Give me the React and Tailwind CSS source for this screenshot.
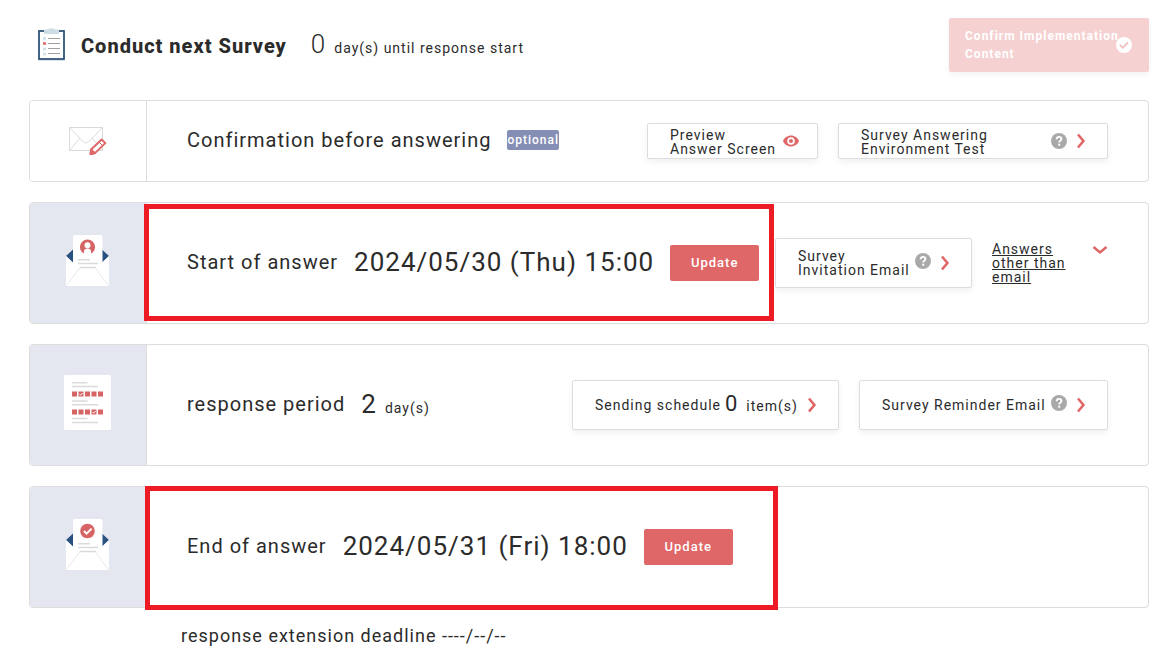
// ==============================================
// Survey schedule overview
// ==============================================

import clsx from "clsx";

const ClipboardIcon = () => (
  <svg width="28" height="34" viewBox="0 0 28 34" fill="none" aria-hidden="true">
    <rect x="2" y="3" width="25" height="28" fill="#fff" stroke="#2f5479" strokeWidth="1.800" />
    <path d="M1 32.500h27" stroke="#d9e3ec" />
    <path d="M7 6V1.500h4.500V.5h6v1H22V6z" fill="#cddde6" />
    <path d="M11 10.500h12M11 15.500h12M11 20.500h12M11 25.500h12" stroke="#a0a0a0" />
    <path d="M6 10.500h3M6 21h3M6 26h3" stroke="#cfe0ea" strokeWidth="2.500" />
    <path d="M6 15.500h3" stroke="#df6767" strokeWidth="2.500" />
  </svg>
);

const MailEditIcon = () => (
  <svg width="38" height="30" viewBox="0 0 38 30" fill="none" aria-hidden="true">
    <path d="M.5 1.500h33v23H.5z" stroke="#d9d9d9" />
    <path d="M.5 1.500 14.500 16q2.500 2 5 0L33.500 1.500M.5 24.500 11 12M33.500 24.500 23 12" stroke="#dcdcdc" />
    <path d="m21.500 28 .8-4.800L32.700 13.500l3.600 3.600-10.300 10z" fill="#fff" stroke="#df6767" strokeWidth="2" strokeLinejoin="round" />
    <path d="m21 28.700 1-6.200 5 4.900zM30 16l3.800 3.800" fill="#df6767" stroke="#df6767" />
  </svg>
);

const OpenMail = ({ children }) => (
  <svg width="43" height="51" viewBox="0 0 43 51" fill="none" aria-hidden="true">
    <path d="m0 21 7-6.500V28zM43 21l-7-6.500V28z" fill="#2a5280" />
    <path d="M0 21l7 6.500h29l7-6.500v28.500q0 1.500-1.500 1.500h-40Q0 51 0 49.500z" fill="#fff" />
    <path d="M8.500 0h26q2 0 2 2v30H7V2q0-2 1.500-2z" fill="#fff" />
    <path d="m1 50 13-17.500M42 50 29 32.500" stroke="#e9e9ec" />
    <path d="M12 24.700h12M12 28.500h20M14 32.500h16" stroke="#dadada" strokeWidth="1.500" />
    {children}
  </svg>
);

const MailPersonIcon = () => (
  <OpenMail>
    <circle cx="21.500" cy="12" r="7.600" fill="#d66464" />
    <circle cx="21.500" cy="10.200" r="3" fill="#fff" />
    <path d="M17.800 20v-2.500q0-4 3.700-4t3.700 4V20z" fill="#fff" />
  </OpenMail>
);

const MailCheckIcon = () => (
  <OpenMail>
    <circle cx="21.500" cy="12" r="7.300" fill="#d66464" />
    <path d="m18 12 2.600 2.600 5-5" stroke="#fff" strokeWidth="2" />
  </OpenMail>
);

const boxes = [8, 14.5, 21, 27.5, 34];

const SheetIcon = () => (
  <svg width="47" height="55" viewBox="0 0 47 55" fill="none" aria-hidden="true">
    <rect width="47" height="55" rx="1.500" fill="#fff" />
    <path d="M8 7.800h15.500M8 11.500h26M8 26h15.500M8 29.700h26M8 43.500h15.500M8 47.500h26" stroke="#dcdcdc" strokeWidth="1.400" />
    {boxes.map((x) => (
      <g key={x} fill="#d66464">
        <rect x={x} y="16.500" width="5" height="5" />
        <rect x={x} y="34.500" width="5" height="5" />
      </g>
    ))}
    <path d="m15.500 19 1.200 1.200 2-2.200M28.500 37l1.200 1.200 2-2.200" stroke="#fff" />
  </svg>
);

const EyeIcon = () => (
  <svg width="16" height="12" viewBox="0 0 16 12" aria-hidden="true" className="shrink-0">
    <path
      fillRule="evenodd"
      d="M8 .5C4.400.5 1.300 2.800 0 6c1.300 3.200 4.400 5.500 8 5.500s6.700-2.300 8-5.500C14.700 2.800 11.600.5 8 .5zM8 9.800a3.800 3.800 0 1 1 0-7.600 3.800 3.800 0 0 1 0 7.600z"
      fill="#df6767"
    />
    <circle cx="8" cy="6" r="2" fill="#df6767" />
  </svg>
);

const ChevronIcon = ({ down = false }) => (
  <svg
    width="16"
    height="16"
    viewBox="0 0 16 16"
    fill="none"
    aria-hidden="true"
    className={clsx("shrink-0", down && "rotate-90")}
  >
    <path d="m5 1.500 5.400 6.500L5 14.500" stroke="#df6767" strokeWidth="2.600" />
  </svg>
);

const HelpIcon = () => (
  <svg width="16" height="16" viewBox="0 0 16 16" fill="none" aria-hidden="true" className="shrink-0">
    <circle cx="8" cy="8" r="8" fill="#a9a9a9" />
    <path d="M5.700 6.300c0-1.500 1-2.400 2.400-2.400s2.300.8 2.300 2.100c0 1.600-2.200 1.700-2.200 3.500" stroke="#fff" strokeWidth="1.900" />
    <path d="M7.200 10.700h2v2h-2z" fill="#fff" />
  </svg>
);

const CheckIcon = () => (
  <svg width="16" height="16" viewBox="0 0 16 16" fill="none" aria-hidden="true">
    <circle cx="8" cy="8" r="8" fill="#fff" />
    <path d="m4 8 2.800 2.800L12 5.500" stroke="#f0c2c2" strokeWidth="1.800" />
  </svg>
);

const Card = ({ icon, tinted = true, children }) => (
  <section className="relative flex rounded border border-[#dddddd] bg-white">
    <div
      className={clsx(
        "flex w-[117px] shrink-0 items-center justify-center rounded-l-[3px] border-r border-[#dddddd]",
        tinted ? "bg-[#e4e7ef] pb-1.5 pr-0.5" : "bg-white",
      )}
    >
      {icon}
    </div>
    <div
      className={clsx(
        "flex flex-1 items-center justify-between pl-10 pr-10",
        tinted ? "min-h-[120px]" : "min-h-20",
      )}
    >
      {children}
    </div>
  </section>
);

const OutlineButton = ({ className, children }) => (
  <button
    type="button"
    className={clsx(
      "flex shrink-0 items-center rounded-xs border border-[#dddddd] bg-white pl-[22px] text-left text-sm leading-[14px] shadow-[0_3px_6px_rgba(0,0,0,0.06)]",
      className,
    )}
  >
    {children}
  </button>
);

const UpdateButton = () => (
  <button type="button" className="h-9 w-[89px] rounded-xs bg-[#df6767] text-[13px] font-medium text-white">
    Update
  </button>
);

const DateRow = ({ title, date }) => (
  <div className="flex shrink-0 items-center gap-4 whitespace-nowrap">
    <h3 className="pb-0.5 text-xl">{title}</h3>
    <time className="pb-0.5 text-[26px] leading-9">{date}</time>
    <UpdateButton />
  </div>
);

const App = () => {
  return (
    <main className="bg-white pl-[29px] pr-[25px] pt-[18px] font-['Roboto',sans-serif] tracking-[1px] text-[#2b2b2b]">
      <header className="flex items-center justify-between">
        <div className="flex items-center gap-4 pl-2">
          <ClipboardIcon />
          <div className="flex items-baseline pb-0.5">
            <h2 className="text-xl font-extrabold">Conduct next Survey</h2>
            <span className="pl-6 text-[26px] font-light leading-9">0</span>
            <span className="pl-2 text-sm">day(s) until response start</span>
          </div>
        </div>

        <button
          type="button"
          disabled
          className="relative h-[54px] w-[200px] rounded-xs bg-[#f5d1d1] pl-4 pr-4 text-left text-xs font-bold leading-[18px] text-white shadow-[0_3px_6px_rgba(0,0,0,0.05)]"
        >
          Confirm Implementation Content
          <span className="absolute right-[17px] top-[19px]">
            <CheckIcon />
          </span>
        </button>
      </header>

      <div className="mt-7 flex flex-col gap-5">
        <Card icon={<MailEditIcon />} tinted={false}>
          <div className="flex items-center gap-4 whitespace-nowrap pb-0.5">
            <h3 className="text-xl">Confirmation before answering</h3>
            <span className="h-5 rounded-xs bg-[#858eb4] text-xs font-medium leading-5 text-white">
              optional
            </span>
          </div>
          <div className="flex gap-5">
            <OutlineButton className="h-9 w-[171px] gap-[7px]">
              <span className="pt-0.5">
                Preview
                <br />
                Answer Screen
              </span>
              <EyeIcon />
            </OutlineButton>
            <OutlineButton className="h-9 w-[270px] justify-between pr-[18px]">
              <span className="pt-0.5">
                Survey Answering
                <br />
                Environment Test
              </span>
              <span className="flex gap-1.5">
                <HelpIcon />
                <ChevronIcon />
              </span>
            </OutlineButton>
          </div>
        </Card>

        <Card icon={<MailPersonIcon />}>
          <DateRow title="Start of answer" date="2024/05/30 (Thu) 15:00" />
          <div className="flex shrink-0 items-center gap-5">
            <OutlineButton className="h-[50px] w-[197px] justify-between pr-[18px]">
              <span>
                Survey
                <br />
                Invitation Email
              </span>
              <span className="flex items-center gap-1.5">
                <span className="pb-1">
                  <HelpIcon />
                </span>
                <ChevronIcon />
              </span>
            </OutlineButton>
            <a href="#other" className="flex w-[116px] items-start justify-between text-sm leading-[14px]">
              <span className="w-20 underline">Answers other than email</span>
              <ChevronIcon down />
            </a>
          </div>
          {/* Highlight frame */}
          <div className="pointer-events-none absolute left-[114px] top-px h-[117px] w-[630px] border-[5px] border-[#ed1c24]" />
        </Card>

        <Card icon={<SheetIcon />}>
          <div className="flex items-center whitespace-nowrap">
            <h3 className="pb-0.5 text-xl">response period</h3>
            <span className="flex items-baseline pb-0.5">
              <span className="pl-4 text-[26px] leading-9">2</span>
              <span className="pl-2 text-sm">day(s)</span>
            </span>
          </div>
          <div className="flex gap-5">
            <OutlineButton className="h-[50px] w-[267px] justify-between pr-[18px]">
              <span className="flex items-center whitespace-nowrap">
                Sending schedule
                <span className="flex items-baseline">
                  <span className="pl-1 text-[22px]">0</span>
                  <span className="pl-2">item(s)</span>
                </span>
              </span>
              <ChevronIcon />
            </OutlineButton>
            <OutlineButton className="h-[50px] w-[249px] justify-between pr-[18px]">
              <span className="whitespace-nowrap">Survey Reminder Email</span>
              <span className="flex items-center gap-1.5">
                <span className="pb-1">
                  <HelpIcon />
                </span>
                <ChevronIcon />
              </span>
            </OutlineButton>
          </div>
        </Card>

        <Card icon={<MailCheckIcon />}>
          <DateRow title="End of answer" date="2024/05/31 (Fri) 18:00" />
          {/* Highlight frame */}
          <div className="pointer-events-none absolute -top-px left-[115px] h-[124px] w-[633px] border-[5px] border-[#ed1c24]" />
        </Card>
      </div>

      <p className="pl-[152px] pt-[14px] text-lg">response extension deadline ----/--/--</p>
    </main>
  );
};

export default App;
